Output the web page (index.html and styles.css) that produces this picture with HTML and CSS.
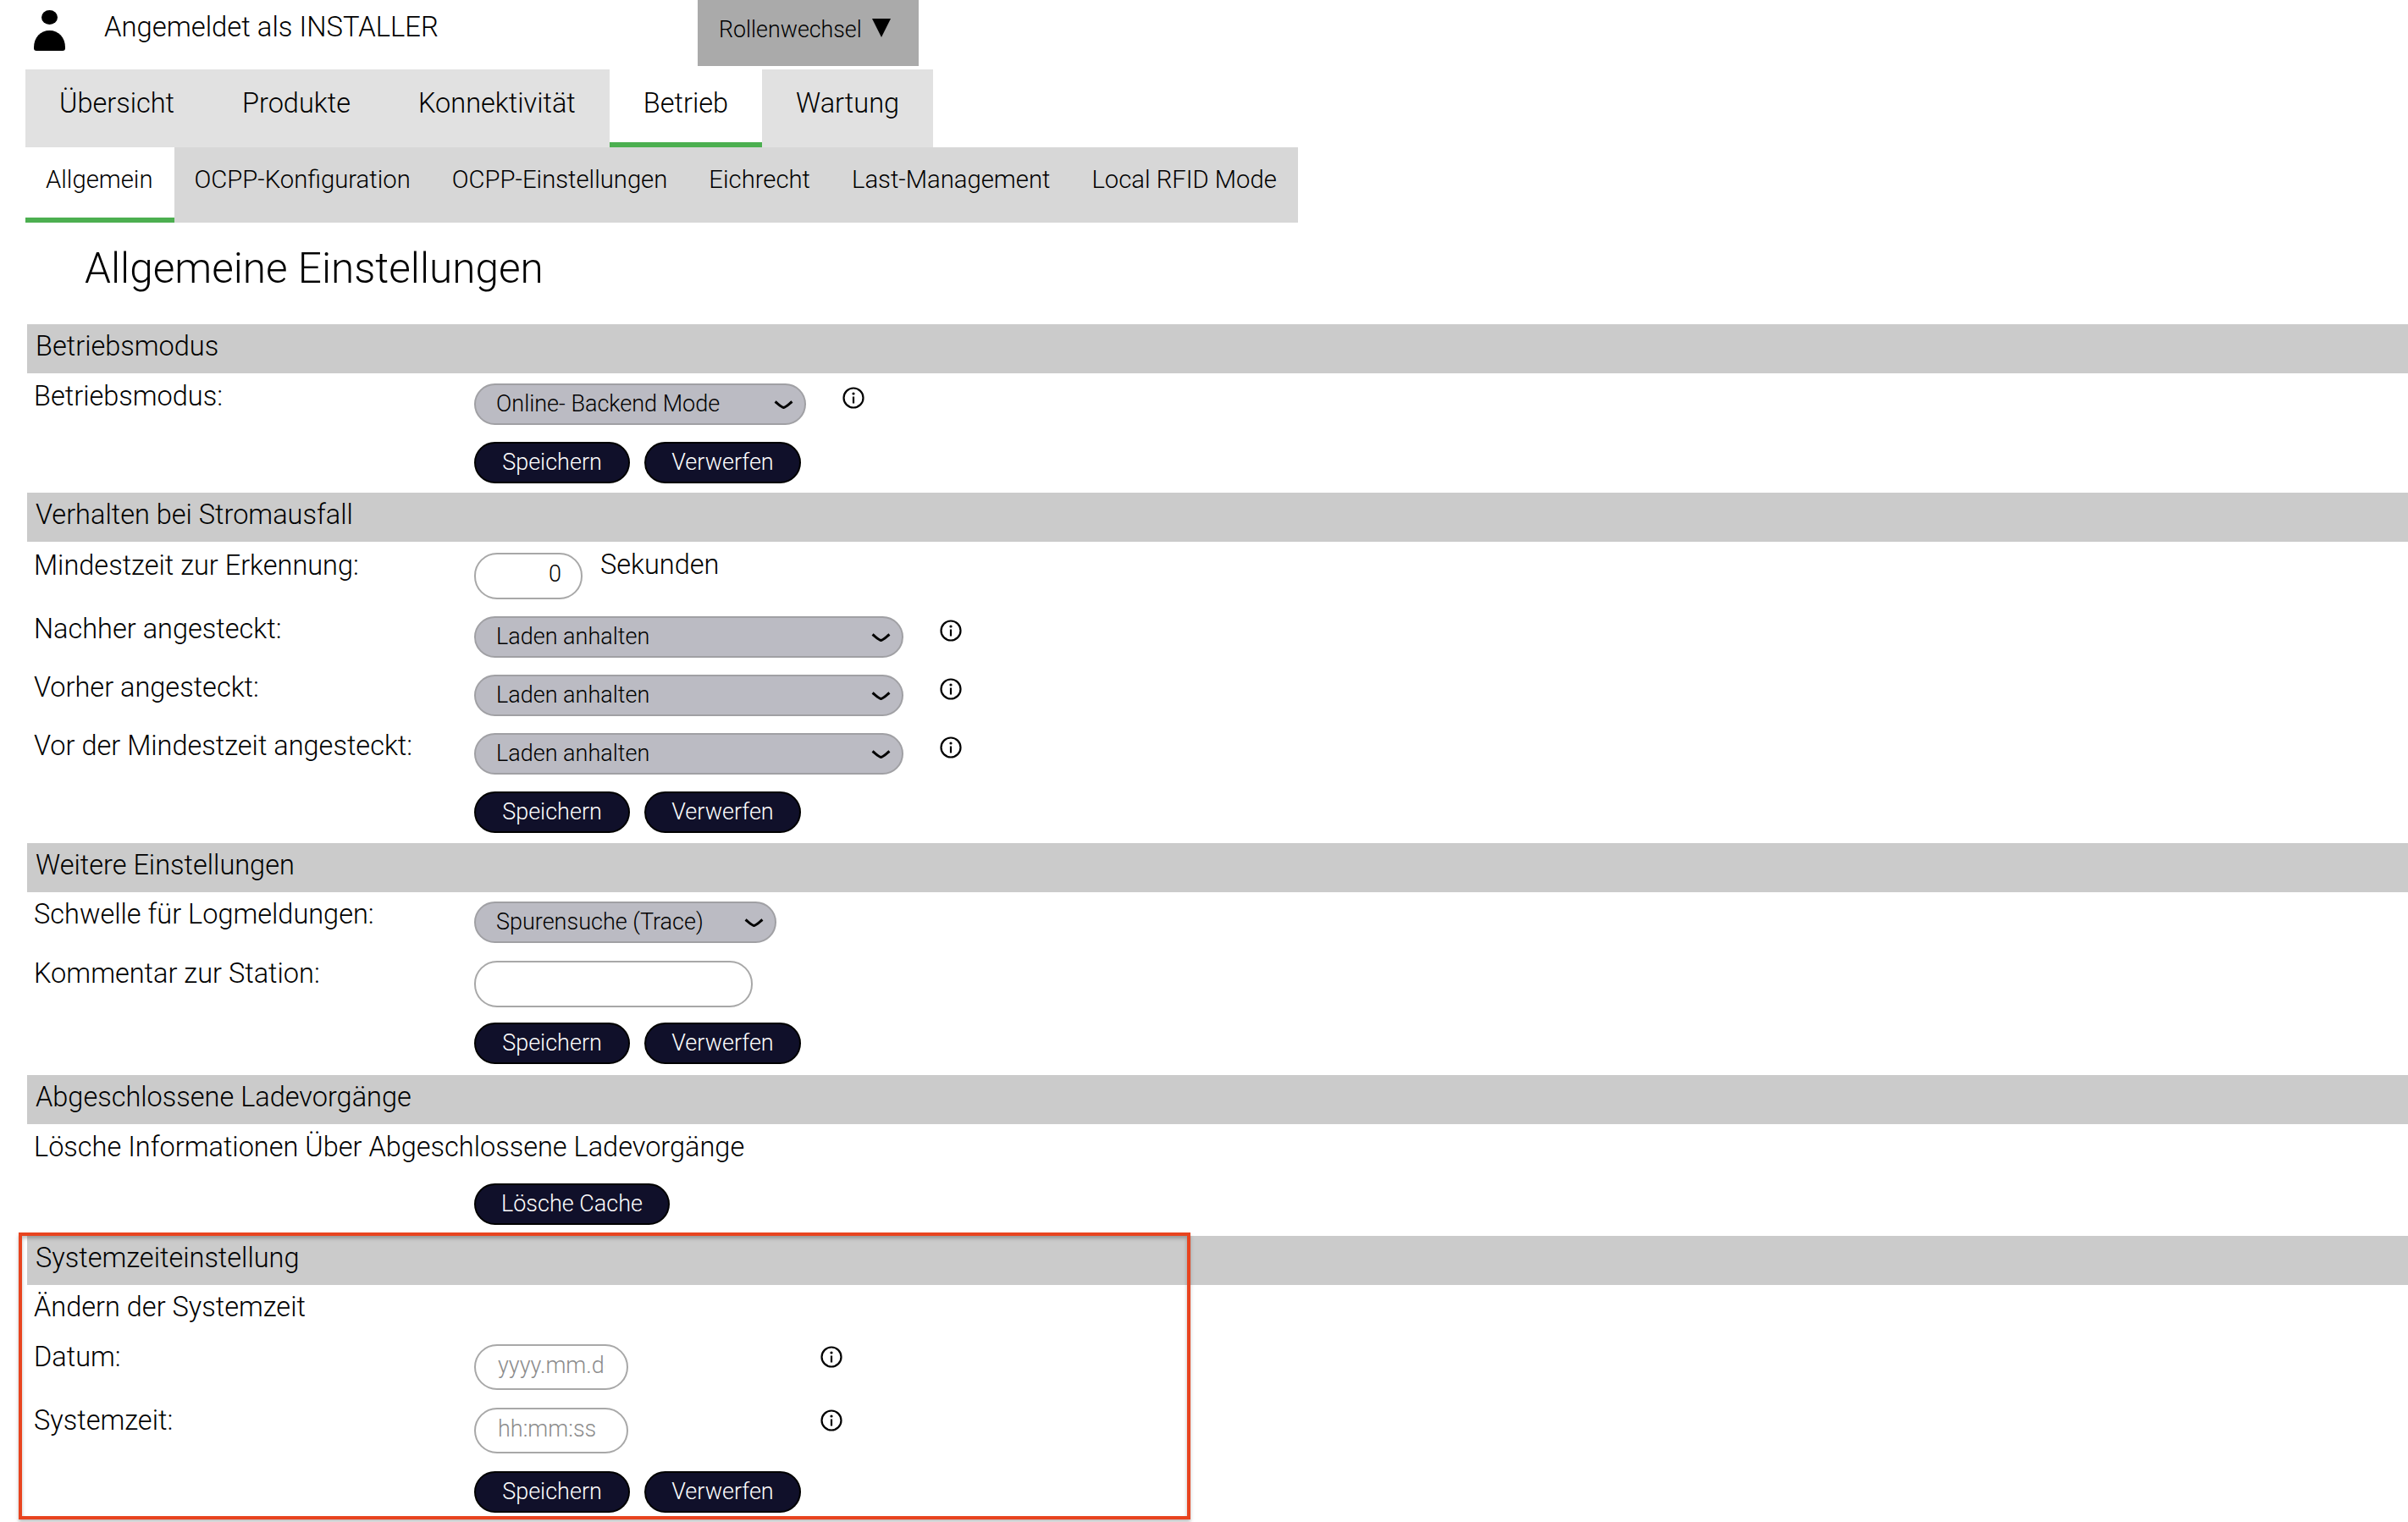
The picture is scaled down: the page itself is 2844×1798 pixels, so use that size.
FILE: index.html
```html
<!DOCTYPE html>
<html lang="de">
<head>
<meta charset="utf-8">
<title>Allgemeine Einstellungen</title>
<link rel="stylesheet" href="styles.css">
</head>
<body>
<div class="topbar">
  <svg class="person" viewBox="0 0 37 48" width="37" height="48"><ellipse cx="18.5" cy="8.5" rx="9.5" ry="8.5"/><path d="M0 44C0 32 8 24 18.500 24S37 32 37 44V45Q37 48 34 48H3Q0 48 0 45Z"/></svg>
  <span class="user">Angemeldet als INSTALLER</span>
  <div class="role">Rollenwechsel <span class="tri"></span></div>
</div>

<div class="tabs">
  <a>Übersicht</a><a>Produkte</a><a>Konnektivität</a><a class="active">Betrieb</a><a>Wartung</a>
</div>
<div class="subtabs">
  <a class="active">Allgemein</a><a>OCPP-Konfiguration</a><a>OCPP-Einstellungen</a><a>Eichrecht</a><a>Last-Management</a><a>Local RFID Mode</a>
</div>

<h1>Allgemeine Einstellungen</h1>

<section class="sec-first">
  <h2>Betriebsmodus</h2>
  <div class="row r-top12">
    <label>Betriebsmodus:</label>
    <select class="s-mode"><option>Online- Backend Mode</option></select>
    <svg class="info" viewBox="0 0 26 26"><use href="#i"/></svg>
  </div>
  <div class="row r-gap"><label></label><button>Speichern</button><button>Verwerfen</button></div>
</section>

<section>
  <h2>Verhalten bei Stromausfall</h2>
  <div class="row r-top13">
    <label>Mindestzeit zur Erkennung:</label>
    <input class="num" value="0">
    <span class="unit">Sekunden</span>
  </div>
  <div class="row r-gap">
    <label>Nachher angesteckt:</label>
    <select class="s-wide"><option>Laden anhalten</option></select>
    <svg class="info" viewBox="0 0 26 26"><use href="#i"/></svg>
  </div>
  <div class="row r-gap">
    <label>Vorher angesteckt:</label>
    <select class="s-wide"><option>Laden anhalten</option></select>
    <svg class="info" viewBox="0 0 26 26"><use href="#i"/></svg>
  </div>
  <div class="row r-gap">
    <label>Vor der Mindestzeit angesteckt:</label>
    <select class="s-wide"><option>Laden anhalten</option></select>
    <svg class="info" viewBox="0 0 26 26"><use href="#i"/></svg>
  </div>
  <div class="row r-gap"><label></label><button>Speichern</button><button>Verwerfen</button></div>
</section>

<section>
  <h2>Weitere Einstellungen</h2>
  <div class="row r-top11">
    <label>Schwelle für Logmeldungen:</label>
    <select class="s-log"><option>Spurensuche (Trace)</option></select>
  </div>
  <div class="row r-gap21">
    <label>Kommentar zur Station:</label>
    <input class="comment">
  </div>
  <div class="row r-btn18"><label></label><button>Speichern</button><button>Verwerfen</button></div>
</section>

<section>
  <h2>Abgeschlossene Ladevorgänge</h2>
  <p class="note">Lösche Informationen Über Abgeschlossene Ladevorgänge</p>
  <div class="row r-btn23"><label></label><button class="cache">Lösche Cache</button></div>
</section>

<section>
  <h2>Systemzeiteinstellung</h2>
  <p class="note note-sys">Ändern der Systemzeit</p>
  <div class="row r-top24">
    <label>Datum:</label>
    <input class="dt" placeholder="yyyy.mm.dd">
    <svg class="info far" viewBox="0 0 26 26"><use href="#i"/></svg>
  </div>
  <div class="row r-gap21">
    <label>Systemzeit:</label>
    <input class="dt" placeholder="hh:mm:ss">
    <svg class="info far" viewBox="0 0 26 26"><use href="#i"/></svg>
  </div>
  <div class="row r-gap21"><label></label><button>Speichern</button><button>Verwerfen</button></div>
</section>

<div class="callout"></div>

<svg width="0" height="0" class="defs"><symbol id="i" viewBox="0 0 26 26"><circle cx="13" cy="13" r="11.500" fill="none" stroke="#000" stroke-width="2.200"/><circle cx="13" cy="8" r="1.600"/><path d="M11.900 11.500h2.200v8h-2.200z"/></symbol></svg>
</body>
</html>
```

FILE: styles.css
```css
body {
  margin: 0;
  position: relative;
  height: 1798px;
  overflow: hidden;
  font-family: Roboto, "Liberation Sans", sans-serif;
  font-weight: 300;
  font-size: 32.500px;
  color: #000;
  background: #fff;
}

.topbar {
  display: flex;
  height: 82px;
  margin-left: 40px;
}

.person {
  margin-top: 12px;
}

.user {
  margin: 12px 0 0 46px;
  width: 701px;
  font-size: 32.800px;
  line-height: 40px;
}

.role {
  width: 261px;
  height: 78px;
  box-sizing: border-box;
  padding: 17px 0 0 25px;
  background: #aaa;
  font-size: 26.800px;
  line-height: 36px;
}

.tri {
  display: inline-block;
  margin-left: 6px;
  border-left: 11px solid transparent;
  border-right: 11px solid transparent;
  border-top: 22px solid #000;
}

.tabs {
  display: flex;
  width: max-content;
  margin-left: 30px;
  background: #e1e1e1;
}

.tabs a {
  height: 92px;
  box-sizing: border-box;
  padding: 20px 40px 0;
  font-size: 32.500px;
  line-height: 40px;
}

.subtabs {
  display: flex;
  width: max-content;
  margin-left: 30px;
  background: #d7d7d7;
}

.subtabs a {
  height: 89px;
  box-sizing: border-box;
  padding: 19px 25px 0 24px;
  font-size: 29.250px;
  line-height: 38px;
}

.tabs a.active,
.subtabs a.active {
  background: #fff;
  border-bottom: 6px solid #4caf50;
}

h1 {
  margin: 0 0 0 100px;
  height: 120px;
  font-size: 49.500px;
  font-weight: 300;
  line-height: 108px;
}

section {
  margin-left: 32px;
  padding-bottom: 12px;
}

.sec-first {
  padding-bottom: 11px;
}

h2 {
  margin: 0;
  height: 58px;
  padding-left: 10px;
  background: #cbcbcb;
  font-size: 32.500px;
  font-weight: 300;
  line-height: 52px;
}

.row {
  display: flex;
  align-items: flex-start;
}

.row label {
  flex: none;
  width: 520px;
  margin-top: -5px;
  padding-left: 8px;
  line-height: 40px;
}

.r-top11 { margin-top: 11px; }
.r-top12 { margin-top: 12px; }
.r-top13 { margin-top: 13px; }
.r-top24 { margin-top: 24px; }
.r-gap { margin-top: 20px; }
.r-gap21 { margin-top: 21px; }
.r-btn18 { margin-top: 18px; margin-bottom: 1px; }
.r-btn23 { margin-top: 23px; margin-bottom: 1px; }

.note {
  margin: 7px 0 0 8px;
  line-height: 40px;
}

.note-sys {
  margin-top: 6px;
}

select,
input,
button {
  box-sizing: border-box;
  font-family: inherit;
  font-weight: 300;
  font-size: 27px;
  color: #000;
}

select {
  height: 49px;
  padding: 0 0 2px 24px;
  appearance: none;
  -webkit-appearance: none;
  border: 2px solid #a0a0a4;
  border-radius: 25px;
  background: #bbbbc3 url("data:image/svg+xml,%3Csvg xmlns='http://www.w3.org/2000/svg' width='23' height='10' viewBox='0 0 23 10'%3E%3Cpath d='M1.500 1.500C6 5 9 8 11.500 8.500C14 8 17 5 21.500 1.500' fill='none' stroke='%23000' stroke-width='3'/%3E%3C/svg%3E") no-repeat right 13px center;
}

.s-mode { width: 392px; }
.s-wide { width: 507px; }
.s-log { width: 357px; }

input {
  outline: none;
  border: 2px solid #a8a8a8;
  border-radius: 27px;
  background: #fff;
}

.num {
  width: 128px;
  height: 55px;
  padding: 0 23px 5px 0;
  text-align: right;
}

.unit {
  margin-top: -6px;
  margin-left: 21px;
  line-height: 40px;
}

.comment {
  width: 329px;
  height: 55px;
}

.dt {
  width: 182px;
  height: 54px;
  padding: 0 25px 5px 26px;
}

.dt::placeholder {
  color: #8c8c8c;
  opacity: 1;
}

.info {
  width: 26px;
  height: 26px;
  margin-left: 43px;
  margin-top: 4px;
}

.info.far {
  margin-top: 2px;
  margin-left: 227px;
}

button {
  width: 184px;
  height: 49px;
  margin-right: 17px;
  padding: 0 0 2px;
  border: 2px solid #000;
  border-radius: 25px;
  background: #10102a;
  color: #fff;
}

button + button {
  width: 185px;
}

.cache {
  width: 231px;
}

.defs {
  position: absolute;
}

.callout {
  position: absolute;
  left: 22px;
  top: 1456px;
  width: 1384px;
  height: 339px;
  box-sizing: border-box;
  border: 4px solid #e8441f;
  box-shadow: 0 3px 4px rgba(0, 0, 0, .25), inset 0 3px 4px rgba(0, 0, 0, .25);
}
```
